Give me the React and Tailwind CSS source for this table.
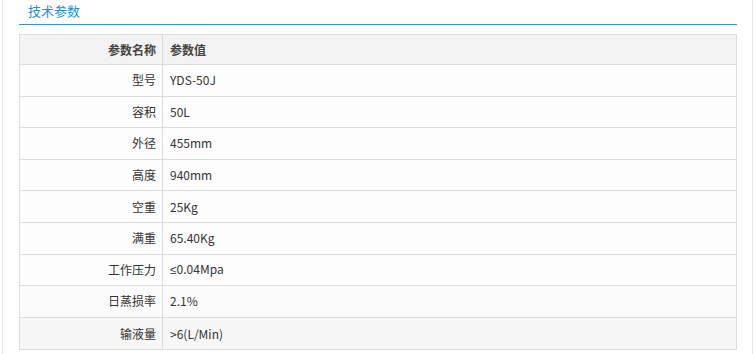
import React from "react";

const rows = [
  ["型号", "YDS-50J"],
  ["容积", "50L"],
  ["外径", "455mm"],
  ["高度", "940mm"],
  ["空重", "25Kg"],
  ["满重", "65.40Kg"],
  ["工作压力", "≤0.04Mpa"],
  ["日蒸损率", "2.1%"],
  ["输液量", ">6(L/Min)"],
];

function Val({ v }) {
  if (v.startsWith("≤")) {
    return (
      <>
        <span style={{ fontFamily: '"Liberation Sans", sans-serif' }}>≤</span>
        {v.slice(1)}
      </>
    );
  }
  return v;
}

export default function App() {
  return (
    <div
      className="w-[755px] h-[354px] bg-white overflow-hidden"
      style={{ fontFamily: '"Microsoft YaHei", "Noto Sans CJK SC", "Noto Sans", sans-serif' }}
    >
      <div className="ml-[2px] w-[751px] h-full border-l border-r border-[#e8e8e8] pl-[16px]">
        <div className="w-[718px]">
          <div className="h-[25px] border-b border-[#3a93d0] pl-[9px] pt-[1px] text-[13px] leading-[20px] text-[#2b8dd1]">
            技术参数
          </div>
          <div className="mt-[9px] border border-[#dddddd] text-[12px] text-[#333333]">
            <div className="flex h-[30px] items-center bg-[#f3f3f3] border-b border-[#dddddd]">
              <div className="w-[143px] h-full flex items-center justify-end pr-[6px] border-r border-[#dddddd] font-semibold text-[#444]">
                参数名称
              </div>
              <div className="pl-[7px] font-semibold text-[#444]">参数值</div>
            </div>
            {rows.map(([k, v], i) => (
              <div
                key={k}
                className={
                  "flex h-[31.6px] items-center " +
                  (i < rows.length - 1 ? "border-b border-[#dddddd] " : "") +
                  (i === rows.length - 1 ? "bg-[#f7f7f7]" : i === rows.length - 2 ? "bg-[#fbfbfb]" : "bg-[#fdfdfd]")
                }
              >
                <div className="w-[143px] h-full flex items-center justify-end pr-[6px] border-r border-[#dddddd]">
                  {k}
                </div>
                <div className="pl-[7px]">
                  <Val v={v} />
                </div>
              </div>
            ))}
          </div>
        </div>
      </div>
    </div>
  );
}
